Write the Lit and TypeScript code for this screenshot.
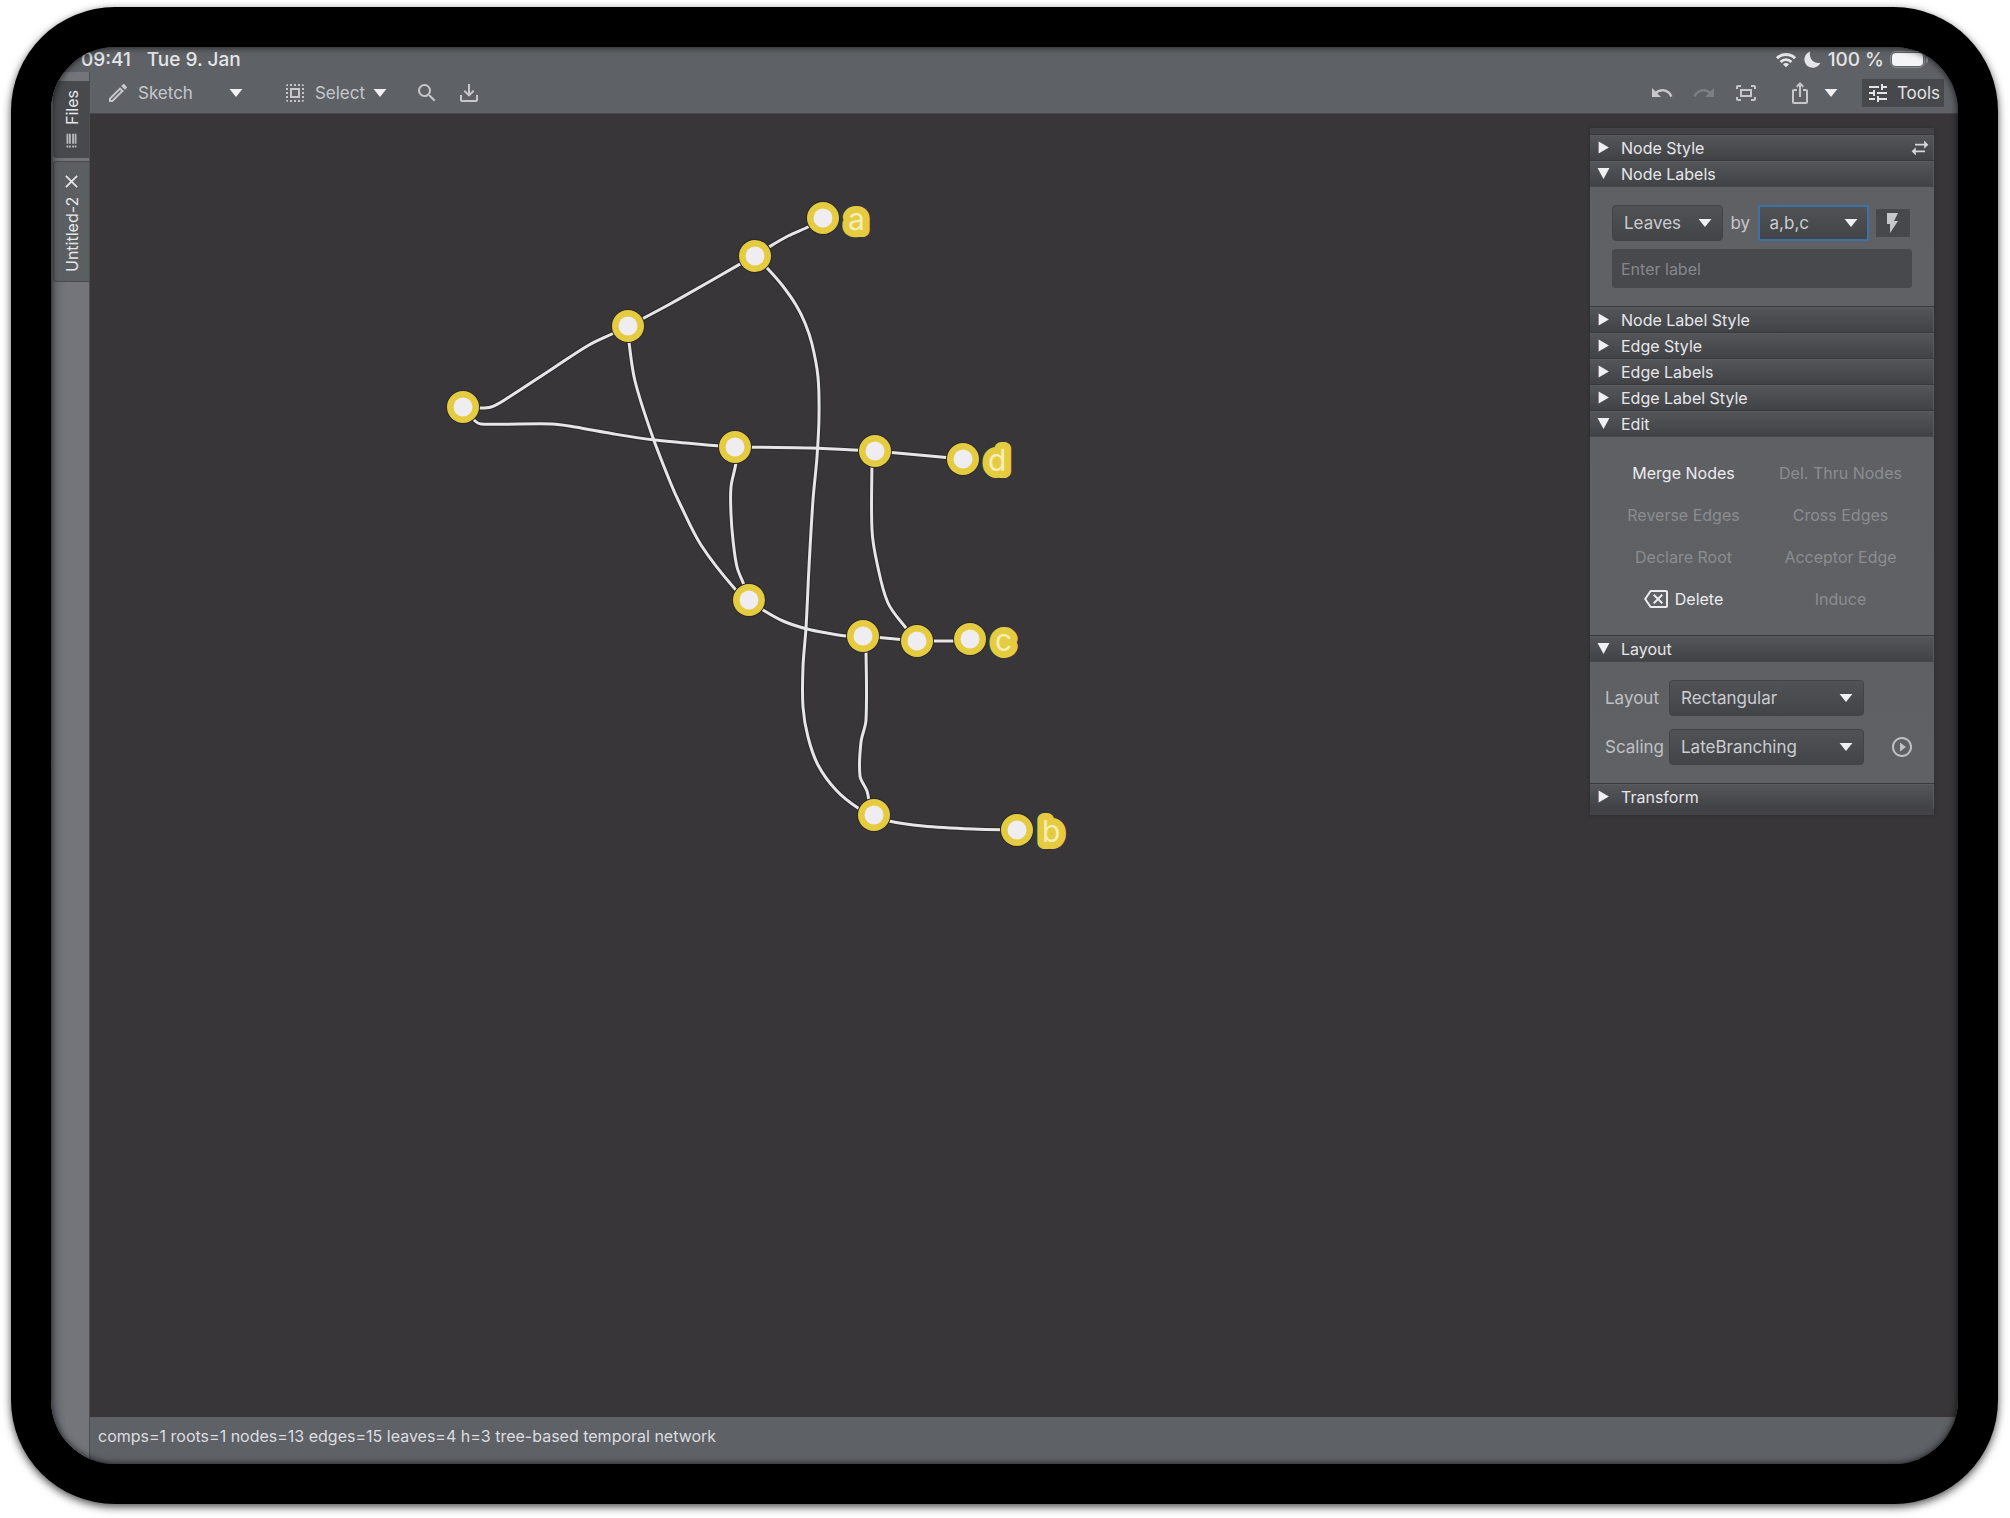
import { LitElement, html, svg, css } from "lit";
import { customElement, property, state } from "lit/decorators.js";
import { classMap } from "lit/directives/class-map.js";

type Point = [number, number];

interface GraphNode {
  at: Point;
  label?: string;
}

const NODES: GraphNode[] = [
  { at: [373, 293] },
  { at: [538, 212] },
  { at: [665, 142] },
  { at: [733, 104], label: "a" },
  { at: [645, 333] },
  { at: [785, 337] },
  { at: [873, 345], label: "d" },
  { at: [659, 486] },
  { at: [773, 522] },
  { at: [827, 527] },
  { at: [880, 525], label: "c" },
  { at: [784, 701] },
  { at: [927, 716], label: "b" },
];

const EDGES: Point[][] = [
  [[373, 293], [388, 294], [401, 293], [416, 285], [462, 255], [499, 231], [524, 219], [538, 212]],
  [[373, 293], [384, 306], [391, 310], [462, 310], [485, 313], [524, 320], [565, 326], [630, 332], [645, 333]],
  [[538, 212], [550, 206], [580, 190], [652, 149], [665, 142]],
  [[665, 142], [679, 133], [698, 122], [720, 112], [733, 104]],
  [[538, 212], [539, 228], [545, 267], [562, 321], [581, 370], [590, 390], [611, 431], [645, 475], [659, 486]],
  [[665, 142], [678, 155], [692, 171], [706, 191], [715, 209], [722, 230], [728, 263], [729, 303], [727, 343], [723, 386], [719, 453], [716, 514], [713, 553], [713, 593], [718, 623], [728, 651], [746, 676], [768, 694], [784, 701]],
  [[645, 333], [646, 348], [641, 373], [641, 400], [643, 426], [647, 453], [654, 471], [659, 486]],
  [[645, 333], [720, 334], [785, 337]],
  [[785, 337], [873, 345]],
  [[782, 342], [782, 416], [787, 449], [798, 489], [816, 514], [827, 527]],
  [[659, 486], [673, 496], [693, 507], [717, 515], [737, 519], [757, 522], [773, 522]],
  [[773, 522], [827, 527]],
  [[827, 527], [880, 527]],
  [[776, 530], [776, 606], [771, 628], [770, 662], [777, 677], [780, 692], [784, 701]],
  [[784, 701], [799, 707], [833, 712], [883, 715], [927, 716]],
];

/** Smooth cubic path through every point of a hand-drawn stroke. */
function smooth(points: Point[]): string {
  let d = `M${points[0][0]} ${points[0][1]}`;
  for (let i = 0; i < points.length - 1; i++) {
    const p0 = points[i - 1] ?? points[i];
    const p1 = points[i];
    const p2 = points[i + 1];
    const p3 = points[i + 2] ?? p2;
    const len = Math.hypot(p2[0] - p1[0], p2[1] - p1[1]);
    const before = Math.hypot(p2[0] - p0[0], p2[1] - p0[1]) || 1;
    const after = Math.hypot(p3[0] - p1[0], p3[1] - p1[1]) || 1;
    const a = len / before / 3;
    const b = len / after / 3;
    d += `C${p1[0] + (p2[0] - p0[0]) * a} ${p1[1] + (p2[1] - p0[1]) * a} ${p2[0] - (p3[0] - p1[0]) * b} ${p2[1] - (p3[1] - p1[1]) * b} ${p2[0]} ${p2[1]}`;
  }
  return d;
}

const ICONS = {
  pencil: svg`<path d="M14.06 9.02l.92.92L5.92 19H5v-.92l9.06-9.06M17.66 3c-.25 0-.51.1-.7.29l-1.83 1.83 3.75 3.75 1.83-1.83c.39-.39.39-1.02 0-1.41l-2.34-2.34c-.2-.2-.45-.29-.71-.29zm-3.6 3.19L3 17.25V21h3.75L17.81 9.94l-3.75-3.75z"/>`,
  select: svg`<path d="M3 5h2V3c-1.100 0-2 .9-2 2zm0 8h2v-2H3v2zm4 8h2v-2H7v2zM3 9h2V7H3v2zm10-6h-2v2h2V3zm6 0v2h2c0-1.100-.9-2-2-2zM5 21v-2H3c0 1.100.9 2 2 2zm-2-4h2v-2H3v2zM9 3H7v2h2V3zm2 18h2v-2h-2v2zm8-8h2v-2h-2v2zm0 8c1.100 0 2-.9 2-2h-2v2zm0-12h2V7h-2v2zm0 8h2v-2h-2v2zm-4 4h2v-2h-2v2zm0-16h2V3h-2v2zM7 17h10V7H7v10zm2-8h6v6H9V9z"/>`,
  search: svg`<path d="M15.500 14h-.79l-.28-.27A6.471 6.471 0 0 0 16 9.500 6.500 6.500 0 1 0 9.500 16c1.610 0 3.090-.59 4.230-1.570l.27.28v.79l5 4.990L20.490 19l-4.990-5zm-6 0C7.010 14 5 11.990 5 9.500S7.010 5 9.500 5 14 7.010 14 9.500 11.990 14 9.500 14z"/>`,
  download: svg`<path d="M11 3h2v9l3-3 1.400 1.400L12 15.800l-5.400-5.400L8 9l3 3zM3 14h2v5h14v-5h2v5a2 2 0 0 1-2 2H5a2 2 0 0 1-2-2z"/>`,
  undo: svg`<path d="M12.500 8c-2.650 0-5.050.99-6.900 2.600L2 7v9h9l-3.620-3.620c1.390-1.160 3.160-1.880 5.120-1.880 3.540 0 6.550 2.310 7.600 5.500l2.370-.78C21.080 11.030 17.150 8 12.500 8z"/>`,
  redo: svg`<path d="M18.400 10.600C16.550 8.990 14.150 8 11.500 8c-4.650 0-8.580 3.030-9.960 7.220L3.900 16c1.050-3.190 4.050-5.500 7.600-5.500 1.950 0 3.730.72 5.120 1.880L13 16h9V7l-3.600 3.600z"/>`,
  fit: svg`<path d="M17 4h3c1.100 0 2 .9 2 2v2h-2V6h-3V4zM4 8V6h3V4H4c-1.100 0-2 .9-2 2v2h2zm16 8v2h-3v2h3c1.100 0 2-.9 2-2v-2h-2zM7 18H4v-2H2v2c0 1.100.9 2 2 2h3v-2zM18 8H6v8h12V8zm-2 6H8v-4h8v4z"/>`,
  share: svg`<path d="M16 5l-1.420 1.420-1.590-1.590V16h-1.980V4.830L9.420 6.420 8 5l4-4 4 4zm4 5v11c0 1.100-.9 2-2 2H6c-1.110 0-2-.9-2-2V10c0-1.110.89-2 2-2h3v2H6v11h12V10h-3V8h3c1.100 0 2 .89 2 2z"/>`,
  tune: svg`<path d="M3 17v2h6v-2H3zM3 5v2h10V5H3zm10 16v-2h8v-2h-8v-2h-2v6h2zM7 9v2H3v2h4v2h2V9H7zm14 4v-2H11v2h10zm-6-4h2V7h4V5h-4V3h-2v6z"/>`,
  swap: svg`<path d="M22 8l-5-5v4H6v2h11v4zM2 16l5 5v-4h11v-2H7v-4z"/>`,
  bolt: svg`<path d="M6 2v11h3v9l8-12h-4l4-8z"/>`,
  backspace: svg`<path d="M22 3H7c-.69 0-1.230.35-1.590.88L0 12l5.410 8.110c.36.53.9.89 1.590.89h15c1.100 0 2-.9 2-2V5c0-1.100-.9-2-2-2zm0 16H7.070L2.400 12l4.660-7H22v14zm-11.590-2L14 13.410 17.590 17 19 15.590 15.410 12 19 8.410 17.590 7 14 10.590 10.410 7 9 8.410 12.590 12 9 15.590z"/>`,
  play: svg`<path d="M10 16.500l6-4.500-6-4.500v9zM12 2C6.480 2 2 6.480 2 12s4.480 10 10 10 10-4.480 10-10S17.520 2 12 2zm0 18c-4.410 0-8-3.590-8-8s3.590-8 8-8 8 3.590 8 8-3.590 8-8 8z"/>`,
  close: svg`<path d="M4 2l8 8 8-8 2 2-8 8 8 8-2 2-8-8-8 8-2-2 8-8-8-8z"/>`,
  list: svg`<path d="M4 1h3v3H4zM8 1h3v3H8zM13 1h3v3h-3zM17 1h3v3h-3zM4 7h3v16H4zM8 7h3v16H8zM13 7h3v16h-3zM17 7h3v16h-3z"/>`,
  down: svg`<path d="M1 5h22L12 19z"/>`,
  expanded: svg`<path d="M1 2h22L12 22z"/>`,
  collapsed: svg`<path d="M3 1l19 11L3 23z"/>`,
  wifi: svg`<path d="M1 9l2.300 2.300a12.300 12.300 0 0 1 17.400 0L23 9a15.600 15.600 0 0 0-22 0zm4 4l2.200 2.200a6.800 6.800 0 0 1 9.600 0L19 13a9.900 9.900 0 0 0-14 0zm3.700 3.700L12 20l3.300-3.300a4.700 4.700 0 0 0-6.600 0z"/>`,
  moon: svg`<path d="M9 2A10.500 10.500 0 1 0 22 16C14 18 7 11 9 2z"/>`,
};

type IconName = keyof typeof ICONS;

@customElement("ui-icon")
class UiIcon extends LitElement {
  @property() name: IconName = "down";

  static styles = css`
    :host {
      display: inline-flex;
      flex: none;
      width: 24px;
      height: 24px;
    }
    .glyph {
      width: 100%;
      height: 100%;
      fill: currentColor;
    }
  `;

  render() {
    return html`<svg class="glyph" viewBox="0 0 24 24" aria-hidden="true">${ICONS[this.name]}</svg>`;
  }
}

@customElement("ui-select")
class UiSelect extends LitElement {
  @property() label = "";
  @property({ type: Array }) options: string[] = [];
  @property({ type: Boolean, reflect: true }) active = false;

  static styles = css`
    :host {
      display: block;
      font: inherit;
    }
    .field {
      display: grid;
      grid-template-columns: 1fr 25px;
      align-items: center;
    }
    .box {
      grid-area: 1 / 1 / 2 / 3;
      appearance: none;
      width: 100%;
      height: 36px;
      padding: 0 26px 0 11px;
      border: 1px solid #424347;
      border-radius: 4px;
      background: linear-gradient(#505256, #434448);
      color: #cbccd0;
      font: inherit;
      outline: none;
    }
    :host([active]) .box {
      border: 2px solid #3c72a8;
      border-radius: 2px;
      padding-left: 10px;
    }
    .arrow {
      grid-area: 1 / 2;
      width: 14px;
      height: 14px;
      color: #f0f0f2;
      pointer-events: none;
    }
  `;

  render() {
    return html`<div class="field">
      <select class="box" aria-label=${this.label}>
        ${this.options.map((o) => html`<option>${o}</option>`)}
      </select>
      <ui-icon class="arrow" name="down"></ui-icon>
    </div>`;
  }
}

@customElement("tool-section")
class ToolSection extends LitElement {
  @property() heading = "";
  @property({ type: Boolean }) open = false;
  @property({ type: Boolean }) swappable = false;

  static styles = css`
    :host {
      display: block;
    }
    .bar {
      display: flex;
      align-items: center;
      height: 26px;
      border-top: 1px solid #38393c;
      background: linear-gradient(#54565a, #414246);
      box-shadow: inset 0 1px #595b60, inset -1px 0 #595b60;
      box-sizing: border-box;
      padding-right: 4px;
    }
    .toggle {
      display: flex;
      flex: 1;
      align-items: center;
      gap: 11px;
      padding: 0 0 0 7px;
      border: 0;
      background: none;
      color: #e6e6ea;
      font: inherit;
      font-size: 16px;
      text-align: left;
    }
    .toggle ui-icon {
      width: 13px;
      height: 13px;
      color: #f0f0f2;
    }
    .swap {
      display: flex;
      padding: 0;
      border: 0;
      background: none;
      color: #d5d6d9;
    }
    .swap ui-icon {
      width: 20px;
      height: 20px;
    }
    .body {
      background: linear-gradient(#5e6063, #5f6165);
      border-top: 1px solid #47484c;
    }
  `;

  render() {
    return html`
      <div class="bar">
        <button class="toggle" aria-expanded=${this.open ? "true" : "false"} @click=${() => (this.open = !this.open)}>
          <ui-icon name=${this.open ? "expanded" : "collapsed"}></ui-icon>${this.heading}
        </button>
        ${this.swappable
          ? html`<button class="swap" aria-label="Swap side"><ui-icon name="swap"></ui-icon></button>`
          : null}
      </div>
      ${this.open ? html`<div class="body"><slot></slot></div>` : null}
    `;
  }
}

@customElement("network-canvas")
class NetworkCanvas extends LitElement {
  static styles = css`
    :host {
      display: block;
    }
    .drawing {
      display: block;
      width: 100%;
      height: 100%;
    }
    .edge-shade {
      fill: none;
      stroke: #2a292c;
      stroke-width: 5;
    }
    .edge {
      fill: none;
      stroke: #e6e5e8;
      stroke-width: 3;
    }
    .shade {
      fill: #2c2a28;
    }
    .halo {
      fill: #e5cb40;
    }
    .core {
      fill: #f0edf0;
    }
    .label {
      fill: #f5eeb8;
      stroke: #e5cb40;
      stroke-width: 14;
      stroke-linejoin: round;
      paint-order: stroke;
      font: 30px Inter, "Liberation Sans", sans-serif;
    }
  `;

  render() {
    return html`<svg class="drawing" role="img" aria-label="Phylogenetic network">
      ${EDGES.map((e) => svg`<path class="edge-shade" d=${smooth(e)} />`)}
      ${EDGES.map((e) => svg`<path class="edge" d=${smooth(e)} />`)}
      ${NODES.map(
        ({ at: [x, y], label }) => svg`
          <circle class="shade" cx=${x} cy=${y} r="17" />
          <circle class="halo" cx=${x} cy=${y} r="16" />
          <circle class="core" cx=${x} cy=${y} r="9.500" />
          ${label ? svg`<text class="label" x=${x + 25} y=${y + 12}>${label}</text>` : null}`,
      )}
    </svg>`;
  }
}

@customElement("app-root")
class AppRoot extends LitElement {
  @state() private toolsOpen = true;

  static styles = css`
    :host {
      display: flex;
      box-sizing: border-box;
      min-height: 100vh;
      padding: 7px 12px 14px 11px;
      background: #fff;
      color: #dcdde0;
      font: 17px/20px Inter, "Liberation Sans", sans-serif;
      overflow: hidden;
    }
    .device {
      display: flex;
      flex: 1;
      padding: 40px;
      border-radius: 104px;
      background: #000;
      box-shadow: 0 3px 8px rgba(0, 0, 0, 0.7);
    }
    .screen {
      position: relative;
      display: grid;
      flex: 1;
      grid-template-columns: 39px 1fr;
      grid-template-rows: 25px 42px 1fr 47px;
      border-radius: 64px;
      overflow: hidden;
      background: #5e6165;
    }
    .screen::after {
      content: "";
      position: absolute;
      inset: 0;
      border-radius: 64px;
      box-shadow: inset 0 0 7px rgba(0, 0, 0, 0.8);
      pointer-events: none;
    }
    button {
      border: 0;
      padding: 0;
      background: none;
      color: inherit;
      font: inherit;
    }
    .system {
      grid-column: 1 / 3;
      display: flex;
      align-items: center;
      justify-content: space-between;
      padding: 0 30px;
      color: #e4e5e8;
      font-size: 19px;
      font-weight: 500;
    }
    .system-side {
      display: flex;
      align-items: center;
    }
    .clock {
      gap: 16px;
    }
    .power {
      gap: 6px;
    }
    .wifi {
      width: 22px;
      height: 22px;
    }
    .moon {
      width: 19px;
      height: 19px;
    }
    .battery {
      display: flex;
      align-items: center;
      gap: 1px;
    }
    .cell {
      box-sizing: border-box;
      width: 35px;
      height: 17px;
      border: 1px solid #8b8d91;
      border-radius: 6px;
      padding: 1px;
    }
    .nub {
      width: 2px;
      height: 6px;
      border-radius: 0 2px 2px 0;
      background: #8b8d91;
    }
    .charge {
      height: 100%;
      border-radius: 4px;
      background: #f4f4f6;
    }
    .rail {
      grid-area: 2 / 1 / 5 / 2;
      display: flex;
      flex-direction: column;
      gap: 3px;
      padding: 9px 0 0 2px;
      background: linear-gradient(90deg, #62656a, #73757a 40%);
      border-right: 1px solid #4c4e51;
    }
    .tab {
      display: flex;
      align-items: center;
      justify-content: flex-start;
      box-sizing: border-box;
      writing-mode: vertical-rl;
      transform: rotate(180deg);
      border: 1px solid #47494c;
      border-left: 0;
      border-radius: 0 4px 4px 0;
      background: #5c5f62;
      color: #e4e5e8;
      font-size: 16px;
      white-space: nowrap;
      padding: 9px 0;
      gap: 8px;
      height: 121px;
    }
    .tab.files {
      height: 77px;
      background: #48494c;
    }
    .tab ui-icon {
      width: 15px;
      height: 15px;
    }
    .files ui-icon {
      color: #b5b6ba;
    }
    .close {
      display: flex;
    }
    .toolbar {
      display: flex;
      align-items: center;
      justify-content: space-between;
      padding: 0 14px 0 16px;
      border-bottom: 1px solid #444649;
      color: #c6c7cb;
    }
    .group {
      display: flex;
      align-items: center;
    }
    .tool {
      display: flex;
      align-items: center;
    }
    .tool:disabled {
      color: #7c7f83;
    }
    .menu ui-icon {
      width: 14px;
      height: 14px;
      color: #f0f0f2;
    }
    .sketch {
      gap: 8px;
      margin-right: 36px;
    }
    .pick {
      gap: 8px;
      margin: 0 8px 0 40px;
    }
    .find {
      margin: 0 18px 0 28px;
    }
    .undo,
    .redo {
      margin-right: 18px;
    }
    .fit {
      margin-right: 30px;
    }
    .share {
      margin-right: 12px;
    }
    .tools {
      gap: 7px;
      height: 28px;
      margin-left: 24px;
      padding: 0 4px;
      background: #47484c;
      color: #e2e3e6;
    }
    .workspace {
      display: grid;
      grid-template-columns: 1fr 344px;
      padding-right: 24px;
      background: #383639;
      overflow: hidden;
    }
    .net {
      grid-area: 1 / 1 / 2 / 3;
    }
    .panel {
      grid-area: 1 / 2;
      z-index: 1;
      align-self: start;
      margin-top: 14px;
      padding: 6px 0;
      background: #434347;
      box-shadow: 0 0 3px #2c2c2e;
    }
    .labels {
      display: grid;
      gap: 8px;
      padding: 18px 22px;
    }
    .label-row {
      display: grid;
      grid-template-columns: 111px auto 111px 34px;
      align-items: center;
      justify-content: space-between;
      padding-right: 2px;
      color: #c6c7cb;
    }
    .bolt {
      display: flex;
      align-items: center;
      justify-content: center;
      height: 28px;
      background: #47484c;
    }
    .entry {
      box-sizing: border-box;
      width: 100%;
      height: 39px;
      padding: 0 8px;
      border: 1px solid #48494c;
      border-radius: 3px;
      background: #48494c;
      color: #e4e5e8;
      font: inherit;
      font-size: 16px;
      outline: none;
    }
    .entry::placeholder {
      color: #85878b;
      opacity: 1;
    }
    .edit {
      display: grid;
      grid-template-columns: 1fr 1fr;
      grid-auto-rows: 42px;
      padding: 15px;
      font-size: 16px;
    }
    .action {
      display: flex;
      align-items: center;
      justify-content: center;
      gap: 7px;
      color: #ececef;
    }
    .action:disabled {
      color: #8b8d91;
    }
    .layout {
      display: grid;
      grid-template-columns: 64px 195px 1fr;
      align-items: center;
      gap: 13px 0;
      padding: 18px 20px 18px 15px;
      color: #c0c1c5;
    }
    .run {
      grid-area: 2 / 3;
      display: flex;
      justify-self: end;
    }
    .info {
      display: flex;
      align-items: center;
      padding: 0 8px 10px;
      color: #dcdde0;
      font-size: 16px;
    }
  `;

  private action(text: string, enabled = false) {
    return html`<button class="action" ?disabled=${!enabled}>
      ${text === "Delete" ? html`<ui-icon name="backspace"></ui-icon>` : null}${text}
    </button>`;
  }

  private panel() {
    return html`<aside class="panel" aria-label="Tools">
      <tool-section heading="Node Style" swappable></tool-section>
      <tool-section heading="Node Labels" open>
        <div class="labels">
          <div class="label-row">
            <ui-select label="Label targets" .options=${["Leaves", "Internal", "All"]}></ui-select>
            <span>by</span>
            <ui-select label="Labeling scheme" active .options=${["a,b,c", "1,2,3"]}></ui-select>
            <button class="bolt" aria-label="Apply labels"><ui-icon name="bolt"></ui-icon></button>
          </div>
          <input class="entry" type="text" aria-label="Label" placeholder="Enter label" />
        </div>
      </tool-section>
      <tool-section heading="Node Label Style"></tool-section>
      <tool-section heading="Edge Style"></tool-section>
      <tool-section heading="Edge Labels"></tool-section>
      <tool-section heading="Edge Label Style"></tool-section>
      <tool-section heading="Edit" open>
        <div class="edit">
          ${this.action("Merge Nodes", true)} ${this.action("Del. Thru Nodes")} ${this.action("Reverse Edges")}
          ${this.action("Cross Edges")} ${this.action("Declare Root")} ${this.action("Acceptor Edge")}
          ${this.action("Delete", true)} ${this.action("Induce")}
        </div>
      </tool-section>
      <tool-section heading="Layout" open>
        <div class="layout">
          <span>Layout</span>
          <ui-select label="Layout" .options=${["Rectangular", "Circular", "Radial"]}></ui-select>
          <span></span>
          <span>Scaling</span>
          <ui-select label="Scaling" .options=${["LateBranching", "EarlyBranching"]}></ui-select>
          <button class="run" aria-label="Apply layout"><ui-icon name="play"></ui-icon></button>
        </div>
      </tool-section>
      <tool-section heading="Transform"></tool-section>
    </aside>`;
  }

  render() {
    return html`<div class="device">
      <div class="screen">
        <header class="system">
          <div class="system-side clock"><span>09:41</span><span>Tue 9. Jan</span></div>
          <div class="system-side power">
            <ui-icon class="wifi" name="wifi"></ui-icon>
            <ui-icon class="moon" name="moon"></ui-icon>
            <span>100 %</span>
            <div class="battery">
              <div class="cell"><div class="charge"></div></div>
              <div class="nub"></div>
            </div>
          </div>
        </header>
        <nav class="rail" aria-label="Documents">
          <button class="tab files"><ui-icon name="list"></ui-icon>Files</button>
          <div class="tab">
            <span>Untitled-2</span>
            <button class="close" aria-label="Close Untitled-2"><ui-icon name="close"></ui-icon></button>
          </div>
        </nav>
        <div class="toolbar" role="toolbar">
          <div class="group">
            <button class="tool sketch"><ui-icon name="pencil"></ui-icon>Sketch</button>
            <button class="tool menu" aria-label="Sketch mode"><ui-icon name="down"></ui-icon></button>
            <button class="tool pick"><ui-icon name="select"></ui-icon>Select</button>
            <button class="tool menu" aria-label="Select options"><ui-icon name="down"></ui-icon></button>
            <button class="tool find" aria-label="Find"><ui-icon name="search"></ui-icon></button>
            <button class="tool" aria-label="Import"><ui-icon name="download"></ui-icon></button>
          </div>
          <div class="group">
            <button class="tool undo" aria-label="Undo"><ui-icon name="undo"></ui-icon></button>
            <button class="tool redo" aria-label="Redo" disabled><ui-icon name="redo"></ui-icon></button>
            <button class="tool fit" aria-label="Zoom to fit"><ui-icon name="fit"></ui-icon></button>
            <button class="tool share" aria-label="Share"><ui-icon name="share"></ui-icon></button>
            <button class="tool menu" aria-label="Share options"><ui-icon name="down"></ui-icon></button>
            <button
              class=${classMap({ tool: true, tools: true })}
              aria-pressed=${this.toolsOpen ? "true" : "false"}
              @click=${() => (this.toolsOpen = !this.toolsOpen)}
            >
              <ui-icon name="tune"></ui-icon>Tools
            </button>
          </div>
        </div>
        <main class="workspace">
          <network-canvas class="net"></network-canvas>
          ${this.toolsOpen ? this.panel() : null}
        </main>
        <footer class="info">comps=1 roots=1 nodes=13 edges=15 leaves=4 h=3 tree-based temporal network</footer>
      </div>
    </div>`;
  }
}
